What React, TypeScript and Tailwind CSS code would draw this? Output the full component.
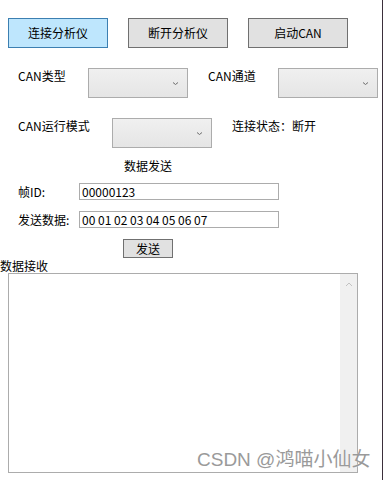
const font = "font-['Microsoft_YaHei','Noto_Sans_CJK_SC',sans-serif]";

const Combo = ({ w = "w-[100px]" }: { w?: string }) => (
  <div
    className={`${w} h-[30px] border border-[#acacac] bg-gradient-to-b from-[#f0f0f0] to-[#e5e5e5] flex items-center justify-end pr-[8px]`}
  >
    <svg width="7" height="5" viewBox="0 0 7 5">
      <path d="M1 1.5 L3.5 3.5 L6 1.5" stroke="#6d6d6d" strokeWidth="1" fill="none" />
    </svg>
  </div>
);

const App = () => {
  return (
    <div
      className={`relative w-[383px] h-[480px] bg-white border-r border-[#3b2f3b] text-[12px] text-black leading-none overflow-hidden ${font}`}
    >
      {/* top buttons */}
      <div className="flex gap-[20px] pl-[8px] pt-[18px]">
        <button className="w-[100px] h-[30px] bg-[#bee6fd] border border-[#3c7fb1] text-[12px]">
          连接分析仪
        </button>
        <button className="w-[100px] h-[30px] bg-[#e1e1e1] border border-[#707070] text-[12px]">
          断开分析仪
        </button>
        <button className="w-[100px] h-[30px] bg-[#e1e1e1] border border-[#707070] text-[12px]">
          启动CAN
        </button>
      </div>

      {/* CAN type / channel */}
      <div className="flex items-start mt-[20px] h-[30px]">
        <span className="ml-[18px] w-[70px] pt-[2px]">CAN类型</span>
        <Combo />
        <span className="ml-[20px] w-[70px] pt-[2px]">CAN通道</span>
        <Combo />
      </div>

      {/* mode / status */}
      <div className="flex items-start mt-[20px] h-[30px]">
        <span className="ml-[18px] w-[94px] pt-[2px]">CAN运行模式</span>
        <Combo />
        <span className="ml-[20px] pt-[2px]">连接状态：断开</span>
      </div>

      <div className="mt-[12px] pl-[124px]">数据发送</div>

      <div className="flex items-center mt-[11px]">
        <span className="ml-[18px] w-[61px]">帧ID:</span>
        <div className="w-[200px] h-[17px] border border-[#acacac] px-[2px] flex items-center text-[12px]">
          00000123
        </div>
      </div>

      <div className="flex items-center mt-[11px]">
        <span className="ml-[18px] w-[61px]">发送数据:</span>
        <div className="w-[200px] h-[17px] border border-[#acacac] px-[2px] flex items-center text-[12px]">
          00 01 02 03 04 05 06 07
        </div>
      </div>

      <div className="mt-[11px] pl-[123px]">
        <button className="w-[50px] h-[19px] bg-[#e1e1e1] border border-[#707070] text-[12px]">
          发送
        </button>
      </div>

      <div className="h-[15px] flex items-center">数据接收</div>

      <div className="ml-[8px] w-[350px] h-[200px] border border-[#acacac] flex justify-end">
        <div className="w-[17px] h-full bg-[#f0f0f0] flex justify-center pt-[8px]">
          <svg width="8" height="5" viewBox="0 0 8 5">
            <path d="M1 4 L4 1 L7 4" stroke="#c2c2c2" strokeWidth="1" fill="none" />
          </svg>
        </div>
      </div>

      {/* watermark */}
      <div className="absolute left-[197px] top-[450px] text-[19px] text-[#9a9a9a] leading-none font-['Liberation_Sans','Noto_Sans_CJK_SC',sans-serif] [text-shadow:0_0_1px_#fff]">
        CSDN @鸿喵小仙女
      </div>
    </div>
  );
};

export default App;
